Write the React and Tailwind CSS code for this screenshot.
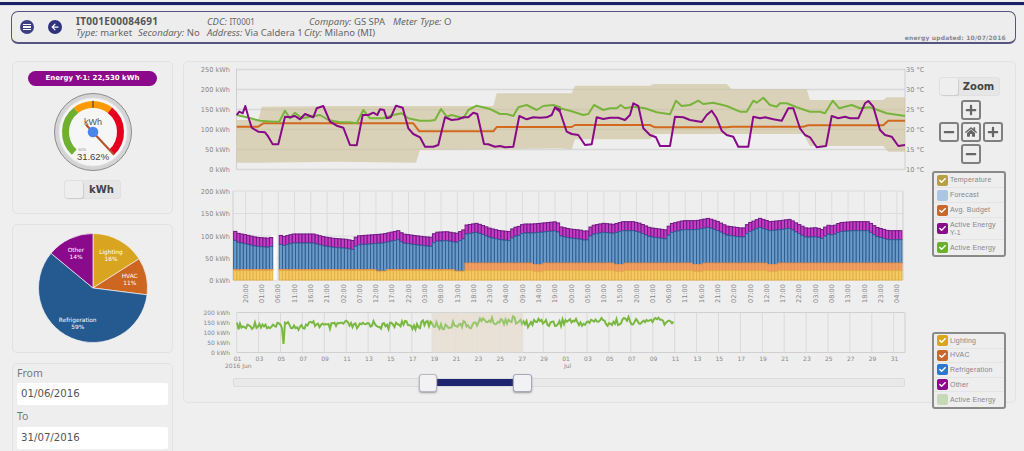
import React from "react";
import { FaHome, FaPlus, FaMinus, FaArrowLeft, FaCheck } from "react-icons/fa";

const m4 = (a) => a.map(([x, y]) => [180 + x / 3, 60 + y / 3]);
const m5 = (a) => a.map(([x, y]) => [550 + x / 3, 60 + y / 3]);
const pts = (a) => a.map((p) => p[0].toFixed(1) + "," + p[1].toFixed(1)).join(" ");

const purple = [...m4([[170,165],[178,155],[188,160],[196,138],[205,170],[215,203],[235,215],[255,217],[265,230],[278,253],[295,253],[315,170],[330,172],[345,168],[360,178],[375,162],[400,172],[410,145],[430,138],[450,185],[470,197],[490,203],[510,255],[530,256],[548,165],[565,165],[580,158],[592,165],[600,148],[612,150],[620,175],[632,172],[648,137],[668,143],[685,205],[700,222],[720,232],[735,260],[760,260],[775,255],[795,172],[815,180],[835,178],[850,172],[865,172],[880,158],[892,162],[912,252],[925,253],[945,260],[960,258],[975,262],[1000,260],[1018,168],[1040,178],[1060,172],[1080,173],[1100,172],[1115,165],[1125,142],[1140,150]]),
...m5([[15,143],[30,155],[50,215],[65,222],[85,225],[105,255],[125,253],[140,172],[160,177],[180,173],[205,173],[225,180],[240,165],[250,130],[265,138],[280,205],[300,225],[318,232],[330,258],[360,258],[375,170],[400,172],[420,180],[455,186],[470,165],[485,152],[500,175],[515,212],[530,225],[550,230],[565,260],[595,260],[610,170],[630,175],[645,172],[670,178],[695,182],[715,145],[730,145],[750,205],[765,225],[780,232],[800,262],[828,258],[845,168],[865,175],[885,170],[900,175],[925,175],[945,130],[955,123],[970,140],[990,210],[1005,225],[1025,230],[1045,258],[1065,255]])];
const green = [...m4([[170,165],[200,172],[240,182],[280,185],[298,185],[315,152],[330,175],[345,158],[365,175],[420,165],[445,180],[480,187],[510,187],[530,190],[550,150],[570,175],[610,175],[640,165],[665,160],[685,175],[720,182],[750,182],[765,180],[783,147],[800,170],[815,165],[850,175],[865,150],[890,137],[930,147],[960,162],[980,162],[1000,168],[1015,142],[1040,135],[1070,150],[1090,138],[1120,135],[1140,142]]),
...m5([[30,145],[60,152],[100,165],[115,162],[132,135],[160,150],[180,145],[200,145],[212,135],[225,145],[250,140],[285,145],[320,157],[360,163],[378,122],[395,138],[420,135],[445,122],[460,132],[490,128],[530,138],[570,155],[590,155],[610,122],[620,128],[640,113],[660,135],[680,140],[690,130],[710,130],[740,142],[780,155],[810,155],[825,160],[848,122],[868,145],[905,135],[930,145],[960,142],[1010,160],[1065,168]])];
const orange = [...m4([[170,200],[235,200],[250,190],[700,190],[718,214],[940,214],[950,201],[1140,201]]),
...m5([[65,201],[75,195],[300,195],[315,202],[530,202],[545,200],[760,200],[775,196],[1000,196],[1015,182],[1065,182]])];
const bandTop = [...m4([[170,180],[235,180],[245,140],[470,138],[940,138],[950,100],[1140,100]]),
...m5([[65,100],[75,77],[300,77],[310,72],[530,72],[545,88],[770,88],[780,120],[1000,120],[1010,112],[1065,112]])];
const bandBottom = [...m4([[170,308],[240,308],[470,305],[708,308],[720,270],[1140,265]]),
...m5([[65,268],[75,238],[300,238],[315,222],[760,222],[780,258],[1000,258],[1015,275],[1065,275]])];

const envelope = [...[[162,152],[175,160],[200,165],[230,172],[270,175],[290,160],[310,170],[340,162],[400,162],[430,170],[460,175],[500,178],[520,182],[530,168],[570,165],[610,162],[655,152],[670,162],[730,170],[755,172],[765,157],[800,155],[830,160],[850,150],[860,135],[890,130],[905,135],[930,145],[960,152],[990,155],[1000,143],[1015,140],[1030,132],[1060,132],[1080,130],[1130,125],[1140,135]].map(([x,y])=>[180+x/3,180+y/3]),
...[[0,140],[30,147],[60,150],[80,155],[95,137],[130,130],[160,133],[190,125],[220,125],[240,130],[270,143],[320,150],[330,132],[370,122],[410,122],[445,115],[470,123],[500,138],[550,145],[565,130],[600,115],[630,125],[660,122],[690,118],[710,130],[740,145],[770,143],[790,150],[800,135],[820,138],[840,128],[880,125],[925,125],[950,142],[985,152],[1025,152]].map(([x,y])=>[560+x/3,180+y/3])];

const interp = (a, x) => {
  for (let i = 1; i < a.length; i++) {
    if (x <= a[i][0]) {
      const t = (x - a[i - 1][0]) / (a[i][0] - a[i - 1][0] || 1);
      return a[i - 1][1] + t * (a[i][1] - a[i - 1][1]);
    }
  }
  return a[a.length - 1][1];
};
const rnd = (i) => { const s = Math.sin(i * 12.9898) * 43758.5453; return s - Math.floor(s); };

const bars = [];
for (let i = 0; i < 205; i++) {
  const x = 233.6 + i * 3.26;
  if (x > 270.5 && x < 276.3) continue;
  if (x > 900.5) break;
  const top = interp(envelope, x + 1.6);
  const dip = [380, 460, 538, 618, 696, 773].some((d) => Math.abs(x - d) < 5);
  bars.push({ x, top, blue: top + 9, or: (x < 465 ? 269.5 : 263) + (dip ? 1.5 : 0), ye: 270.6 + (dip ? 1 : 0) });
}

const nav = [];
for (let i = 0; i * 1.5 + 237 < 675; i++) {
  const x = 237 + i * 1.5;
  const base = interp([[237, 326], [430, 324.5], [450, 326], [500, 320], [523, 322.5], [675, 321]], x);
  nav.push([x, base + (rnd(i) - 0.5) * 7 + Math.sin(i / 3) * 1.5]);
}
const spikeAt = Math.round((283 - 237) / 1.5);
nav[spikeAt] = [nav[spikeAt][0], 344];

const hours = ["20","01","06","11","16","21","02","07","12","17","22","03","08","13","18","23","04","09","14","19","00","05","10","15","20","01","06","11","16","21","02","07","12","17","22","03","08","13","18","23","04"];
const dayLabels = ["01","03","05","07","09","11","13","15","17","19","21","23","25","27","29","01","03","05","07","09","11","13","15","17","19","21","23","25","27","29","31"];

const axisText = { fontSize: 6.6, fill: "#888" };

function TopChart() {
  return (
    <svg width="740" height="116" viewBox="184 62 740 116" className="block">
      {[69.5, 89.5, 109.5, 129.5, 149.5, 169.5].map((y, i) => (
        <g key={y}>
          <line x1="236.5" x2="905" y1={y} y2={y} stroke="#d8d8d8" strokeWidth="1.3" />
          <text x="230" y={y + 2.5} textAnchor="end" {...axisText}>{250 - i * 50} kWh</text>
          <text x="906" y={y + 2.5} {...axisText}>{35 - i * 5} °C</text>
        </g>
      ))}
      <line x1="236.5" x2="236.5" y1="69" y2="170" stroke="#cfcfcf" />
      <line x1="905" x2="905" y1="69" y2="170" stroke="#cfcfcf" />
      <polygon points={pts([...bandTop, ...[...bandBottom].reverse()])} fill="#ccbf94" fillOpacity="0.6" />
      <polyline points={pts(orange)} fill="none" stroke="#d2691e" strokeWidth="2" strokeLinejoin="round" />
      <polyline points={pts(green)} fill="none" stroke="#78b43c" strokeWidth="2" strokeLinejoin="round" />
      <polyline points={pts(purple)} fill="none" stroke="#880a88" strokeWidth="2" strokeLinejoin="round" />
    </svg>
  );
}

function BarChart() {
  return (
    <svg width="740" height="123" viewBox="184 183 740 123" className="block">
      {[191, 213.5, 236, 258, 280].map((y, i) => (
        <g key={y}>
          <line x1="233" x2="903" y1={y} y2={y} stroke="#dcdcdc" />
          <text x="230" y={y + 2.5} textAnchor="end" {...axisText}>{200 - i * 50} kWh</text>
        </g>
      ))}
      {hours.map((h, i) => {
        const x = 245.7 + i * 16.28;
        return (
          <g key={i}>
            <line x1={x} x2={x} y1="191" y2="280" stroke="#dcdcdc" />
            <text transform={`translate(${x + 2.2} 303) rotate(-90)`} {...axisText}>{h}:00</text>
          </g>
        );
      })}
      <line x1="233" x2="233" y1="191" y2="280" stroke="#cfcfcf" />
      <line x1="903" x2="903" y1="191" y2="280" stroke="#cfcfcf" />
      <rect x="271.5" y="235" width="5" height="45" fill="#fbfbfb" />
      {bars.map((b) => (
        <g key={b.x} strokeWidth="1">
          <rect x={b.x} y={b.top} width="3.26" height={b.blue - b.top} fill="#c83cc8" stroke="#6e1a80" />
          <rect x={b.x} y={b.blue} width="3.26" height={b.or - b.blue} fill="#6a9ac8" stroke="#2f5f94" />
          <rect x={b.x} y={b.or} width="3.26" height={Math.max(b.ye - b.or, 0.6)} fill="#f0a066" stroke="#e8914f" />
          <rect x={b.x} y={b.ye} width="3.26" height={280 - b.ye} fill="#f3cb60" stroke="#e3b04a" />
        </g>
      ))}
    </svg>
  );
}

function Navigator() {
  return (
    <svg width="740" height="62" viewBox="184 308 740 62" className="block">
      <rect x="431.7" y="312.5" width="91.5" height="40" fill="#e2cdb0" fillOpacity="0.55" />
      {dayLabels.map((d, i) => {
        const x = 236.7 + i * 21.9;
        return (
          <g key={i}>
            <line x1={x} x2={x} y1="312.5" y2="352.5" stroke="#dadada" />
            <text x={x - 3} y="361" fontSize="6" fill="#888">{d}</text>
          </g>
        );
      })}
      <text x="225" y="368" fontSize="6" fill="#888">2016 Jun</text>
      <text x="564" y="368" fontSize="6" fill="#888">Jul</text>
      {[312.5, 322.5, 332.5, 342.5, 352.5].map((y, i) => (
        <g key={y}>
          <line x1="236.7" x2="905" y1={y} y2={y} stroke={i === 0 || i === 4 ? "#d0d0d0" : "none"} />
          <text x="230" y={y + 2.3} textAnchor="end" fontSize="6" fill="#888">{200 - i * 50} kWh</text>
        </g>
      ))}
      <line x1="905" x2="905" y1="312.5" y2="352.5" stroke="#d0d0d0" />
      <polyline points={pts(nav)} fill="none" stroke="#7ab840" strokeWidth="2" />
      <rect x="431.7" y="312.5" width="91.5" height="40" fill="#eee" fillOpacity="0.25" />
    </svg>
  );
}

function Slider() {
  return (
    <div className="relative ml-[49px] mt-[8px] h-[9px] w-[672px] rounded-[2px] border border-[#dcdcdc] bg-[#e9e9e9]">
      <div className="absolute left-[203px] top-0 h-full w-[77px] bg-[#1e2570]" />
      <div className="absolute left-[185px] top-[-5px] h-[18px] w-[18px] rounded-[3px] border border-[#b8b8c0] bg-[#f2f2f4] shadow-[0_1px_2px_#999]" />
      <div className="absolute left-[279px] top-[-5px] h-[18px] w-[19px] rounded-[3px] border border-[#a8a8b8] bg-[#f2f2f4] shadow-[0_1px_2px_#999]" />
    </div>
  );
}

function Toggle({ label, className }) {
  return (
    <div className={`flex h-[19px] shrink-0 items-center rounded-[3px] border border-[#e0e0e0] bg-[#e6e6e6] ${className}`}>
      <span className="h-full w-[18px] rounded-[3px] bg-[#eeeeee] shadow-[1px_1px_1px_#ccc]" />
      <span className="flex-1 text-center text-[10px] font-bold text-[#444]">{label}</span>
    </div>
  );
}

function NavBtn({ children }) {
  return (
    <div className="flex h-[20px] w-[20px] items-center justify-center rounded-[3px] border-2 border-[#808080] bg-[#eeeeee] text-[#666]">
      {children}
    </div>
  );
}

function Legend({ items, className, compact }) {
  return (
    <div className={`w-[74px] shrink-0 rounded-[3px] border-2 border-[#8a8a8a] bg-[#eeeeee] ${className}`}>
      {items.map((it) => (
        <div key={it.label} className={`flex items-center gap-[2px] border-b border-[#e4e4e4] pl-[3px] last:border-b-0 ${it.tall ? "h-[22px]" : compact ? "h-[14.6px]" : "h-[15px]"}`}>
          <span className="flex h-[11px] w-[11px] shrink-0 items-center justify-center rounded-[2px] text-white" style={{ background: it.color }}>
            {it.on && <FaCheck size={7} />}
          </span>
          <span className="font-['Liberation_Sans',sans-serif] text-[7px] leading-[8px] tracking-[0.2px] text-[#888]">{it.label}</span>
        </div>
      ))}
    </div>
  );
}

function Gauge() {
  const cx = 93, cy = 132.3;
  const p = (deg, r) => {
    const a = ((deg - 90) * Math.PI) / 180;
    return `${(cx + r * Math.cos(a)).toFixed(2)} ${(cy + r * Math.sin(a)).toFixed(2)}`;
  };
  const arc = (a, b, r) => `M ${p(a, r)} A ${r} ${r} 0 0 1 ${p(b, r)}`;
  return (
    <svg width="82" height="82" viewBox="52 91.3 82 82" className="mx-auto mt-[5px] block">
      <circle cx={cx} cy={cy} r="38.5" fill="#d4d4d4" stroke="#8c8c8c" strokeWidth="1" />
      <circle cx={cx} cy={cy} r="34" fill="#f6f6f6" stroke="#e8e8e8" />
      <path d={arc(-137, -38, 27.5)} fill="none" stroke="#6fb030" strokeWidth="7" />
      <path d={arc(-38, 38, 27.5)} fill="none" stroke="#ff9900" strokeWidth="7" />
      <path d={arc(38, 137, 27.5)} fill="none" stroke="#e60020" strokeWidth="7" />
      <line x1={cx} y1="101" x2={cx} y2="108" stroke="#333" strokeWidth="1" />
      <text x={cx} y="125" textAnchor="middle" fontSize="9" fill="#555" fontFamily="Liberation Sans">kWh</text>
      <line x1="86" y1="125" x2="114" y2="155" stroke="#b5502a" strokeWidth="2" />
      <circle cx={cx} cy={cy} r="5.3" fill="#4a86e8" />
      <text x="82" y="151" textAnchor="middle" fontSize="4" fill="#888" fontFamily="Liberation Sans">10%</text>
      <text x={cx} y="160" textAnchor="middle" fontSize="9.5" fill="#444" fontFamily="Liberation Sans">31.62%</text>
    </svg>
  );
}

function Pie() {
  const cx = 55, cy = 55, r = 54.5;
  const slices = [
    [0, 16, "#d9a520"],
    [16, 27, "#cc6620"],
    [27, 86, "#255a91"],
    [86, 100, "#8b0a8b"],
  ];
  const pos = (pct) => {
    const a = (pct / 100) * 2 * Math.PI - Math.PI / 2;
    return `${(cx + r * Math.cos(a)).toFixed(2)} ${(cy + r * Math.sin(a)).toFixed(2)}`;
  };
  const label = (x, y, a, b) => (
    <text textAnchor="middle" fontSize="5.8" fill="#fff" fontFamily="DejaVu Sans">
      <tspan x={x} y={y}>{a}</tspan>
      <tspan x={x} dy="7.3">{b}</tspan>
    </text>
  );
  return (
    <svg width="112" height="112" viewBox="-1 -1 112 112" className="mx-auto block">
      {slices.map(([a, b, c]) => (
        <path key={a} d={`M ${cx} ${cy} L ${pos(a)} A ${r} ${r} 0 ${b - a > 50 ? 1 : 0} 1 ${pos(b)} Z`} fill={c} stroke="#f4f4f4" strokeWidth="0.7" />
      ))}
      {label(73, 20.7, "Lighting", "16%")}
      {label(91.7, 45, "HVAC", "11%")}
      {label(39.7, 89, "Refrigeration", "59%")}
      {label(38, 19, "Other", "14%")}
    </svg>
  );
}

const panel = "rounded-[5px] border border-[#e2e2e2] bg-[#eeeeee]";

export default function App() {
  return (
    <div className="h-[451px] w-[1024px] overflow-hidden bg-[#efefef] font-['DejaVu_Sans',sans-serif]">
      <div className="mt-[2px] h-[3px] bg-[#1b1f66]" />
      <div className="h-px bg-[#dcdce8]" />

      <header className="relative mx-[11px] mt-[5px] flex h-[33px] w-[1005px] items-center rounded-[7px] border border-b-2 border-[#55557f] bg-[#ededed] pl-[8px]">
        <span className="flex h-[14px] w-[14px] flex-col items-center justify-center gap-[1px] rounded-full bg-[#3c3f80]">
          <i className="h-[1.5px] w-[8px] bg-white" />
          <i className="h-[1.5px] w-[8px] bg-white" />
          <i className="h-[1.5px] w-[8px] bg-white" />
        </span>
        <span className="ml-[14px] flex h-[14px] w-[14px] items-center justify-center rounded-full bg-[#2f327c] text-white">
          <FaArrowLeft size={8} />
        </span>
        <div className="ml-[14px] flex flex-col whitespace-nowrap font-['Noto_Sans',sans-serif] text-[9.5px] leading-[11px] text-[#666]">
          <div className="flex">
            <b className="w-[131px] text-[10px] tracking-[0.3px] text-[#555]">IT001E00084691</b>
            <span className="w-[102px]"><em>CDC:</em> <span className="text-[8px]">IT0001</span></span>
            <span className="w-[84px]"><em>Company:</em> GS SPA</span>
            <span><em>Meter Type:</em> O</span>
          </div>
          <div className="flex">
            <span className="w-[62px]"><em>Type:</em> market</span>
            <span className="w-[69px]"><em>Secondary:</em> No</span>
            <span className="w-[97px]"><em>Address:</em> Via Caldera 1</span>
            <span><em>City:</em> Milano (MI)</span>
          </div>
        </div>
        <span className="absolute bottom-0 right-[9px] text-[6px] font-bold tracking-[0.2px] text-[#888]">energy updated: 10/07/2016</span>
      </header>

      <div className="ml-[12px] mt-[17px] flex items-start gap-[10px]">
        <aside className="flex w-[161px] flex-col gap-[10px]">
          <section className={`${panel} h-[153px] pt-[9px]`}>
            <div className="mx-auto flex h-[15px] w-[129px] items-center justify-center rounded-full bg-[#8b0a8b] text-[7px] font-bold text-white">
              Energy Y-1: 22,530 kWh
            </div>
            <Gauge />
            <Toggle label="kWh" className="mx-auto mt-[7px] w-[57px]" />
          </section>
          <section className={`${panel} flex h-[129px] items-center pb-[1px]`}>
            <Pie />
          </section>
          <section className={`${panel} h-[120px] px-[4px] pt-[1px] text-[#777]`}>
            <label className="block font-['Noto_Sans',sans-serif] text-[10.5px] leading-[16px]">From</label>
            <div className="mt-[2px] flex h-[22px] items-center rounded-[2px] bg-white pl-[4px] text-[10.2px] text-[#555]">01/06/2016</div>
            <label className="mt-[3px] block font-['Noto_Sans',sans-serif] text-[10.5px] leading-[16px]">To</label>
            <div className="mt-[3px] flex h-[22px] items-center rounded-[2px] bg-white pl-[4px] text-[10.2px] text-[#555]">31/07/2016</div>
          </section>
        </aside>

        <main className={`${panel} flex h-[342px] w-[833px]`}>
          <div className="w-[740px]">
            <TopChart />
            <div className="h-[5px]" />
            <BarChart />
            <div className="h-[2px]" />
            <Navigator />
            <Slider />
          </div>
          <div className="flex w-[90px] flex-col items-start pl-[8px]">
            <Toggle label="Zoom" className="ml-[7px] mt-[15px] w-[61px]" />
            <div className="ml-[7px] mt-[4px] grid w-[64px] shrink-0 grid-cols-3 gap-[2px]">
              <span />
              <NavBtn><FaPlus size={12} /></NavBtn>
              <span />
              <NavBtn><FaMinus size={12} /></NavBtn>
              <NavBtn><FaHome size={12} /></NavBtn>
              <NavBtn><FaPlus size={12} /></NavBtn>
              <span />
              <NavBtn><FaMinus size={12} /></NavBtn>
            </div>
            <Legend
              className="mt-[7px]"
              items={[
                { label: "Temperature", color: "#b8a040", on: true },
                { label: "Forecast", color: "#aac6e4" },
                { label: "Avg. Budget", color: "#c8682a", on: true },
                { label: "Active Energy Y-1", color: "#8b0a8b", on: true, tall: true },
                { label: "Active Energy", color: "#6ab02f", on: true },
              ]}
            />
            <Legend
              compact
              className="mt-[75px]"
              items={[
                { label: "Lighting", color: "#d9a520", on: true },
                { label: "HVAC", color: "#c8682a", on: true },
                { label: "Refrigeration", color: "#2a78d0", on: true },
                { label: "Other", color: "#8b0a8b", on: true },
                { label: "Active Energy", color: "#c6d9b6" },
              ]}
            />
          </div>
        </main>
      </div>
    </div>
  );
}
